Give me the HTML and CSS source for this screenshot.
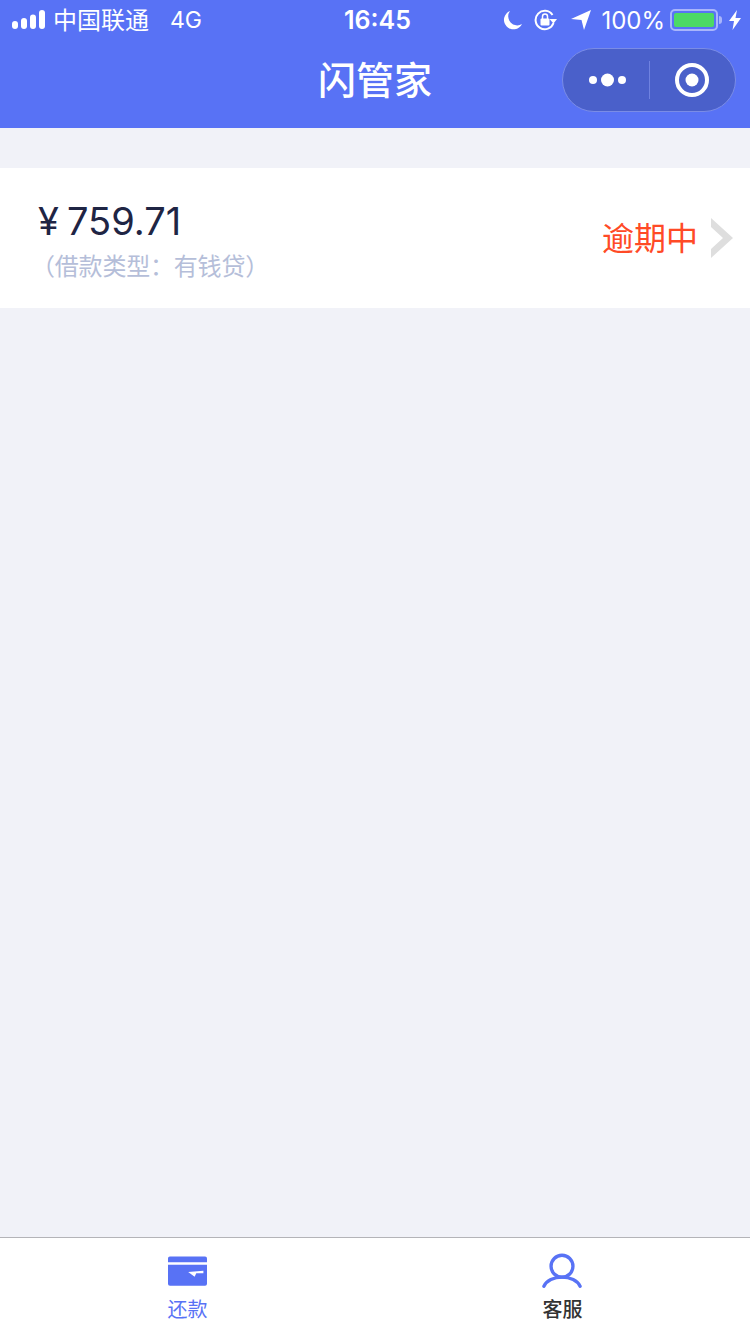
FILE: index.html
```html
<!DOCTYPE html>
<html lang="zh-CN">
  <head>
    <meta charset="UTF-8" />
    <meta name="viewport" content="width=device-width, initial-scale=1.0" />
    <title>闪管家</title>
    <link rel="stylesheet" href="styles.css">
  </head>
  <body>
    <header class="top">
      <div class="statusbar">
        <div class="status-left">
          <svg class="signal" width="34" height="20" viewBox="0 0 34 20">
            <rect x="0" y="11" width="6" height="8" rx="3" fill="#fff"/>
            <rect x="9" y="8" width="6" height="11" rx="3" fill="#fff"/>
            <rect x="18" y="4.500" width="6" height="14.500" rx="3" fill="#fff"/>
            <rect x="27" y="0" width="6" height="19" rx="3" fill="#fff"/>
          </svg>
          <span class="carrier">中国联通</span>
          <span class="network">4G</span>
        </div>
        <div class="clock">16:45</div>
        <div class="status-right">
          <svg class="moon" width="20" height="20" viewBox="0 0 20 20">
            <path d="M7 1 A9.500 9.500 0 1 0 19 14 A9 9 0 0 1 7 1 Z" fill="#fff"/>
          </svg>
          <svg class="rotate" width="24" height="22" viewBox="0 0 24 22">
            <path d="M18.500 6 A9.200 9.200 0 1 0 19.500 14" fill="none" stroke="#fff" stroke-width="2"/>
            <path d="M15.500 10 L23 10 L19.500 14.500 Z" fill="#fff"/>
            <rect x="6.500" y="9.500" width="9" height="7" rx="1" fill="#fff"/>
            <path d="M8.500 10 V7.500 A2.500 2.500 0 0 1 13.500 7.500 V10" fill="none" stroke="#fff" stroke-width="1.500"/>
          </svg>
          <svg class="arrow" width="20" height="20" viewBox="0 0 20 20">
            <path d="M0 9 L20 0 L13 20 L10.500 10 Z" fill="#fff"/>
          </svg>
          <span class="percent">100%</span>
          <div class="battery"><div class="battery-fill"></div></div>
          <span class="battery-tip"></span>
          <svg class="bolt" width="12" height="20" viewBox="0 0 12 20">
            <path d="M8 0 L0 11 L5 11 L3.500 20 L12 8 L6.500 8 Z" fill="#fff"/>
          </svg>
        </div>
      </div>
      <div class="navbar">
        <h1 class="nav-title">闪管家</h1>
        <div class="capsule">
          <div class="capsule-part">
            <svg class="capsule-dots" width="38" height="14" viewBox="0 0 38 14">
              <circle cx="4" cy="7" r="4" fill="#fff"/>
              <circle cx="18.500" cy="7" r="6.500" fill="#fff"/>
              <circle cx="33" cy="7" r="4" fill="#fff"/>
            </svg>
          </div>
          <div class="capsule-line"></div>
          <div class="capsule-part">
            <svg width="34" height="34" viewBox="0 0 34 34">
              <circle cx="17" cy="17" r="15" fill="none" stroke="#fff" stroke-width="4"/>
              <circle cx="17" cy="17" r="6.500" fill="#fff"/>
            </svg>
          </div>
        </div>
      </div>
    </header>

    <main class="content">
      <div class="loan-card">
        <div class="loan-info">
          <div class="loan-amount"><span class="yen">¥</span>759.71</div>
          <div class="loan-type">（借款类型：有钱贷）</div>
        </div>
        <div class="loan-status">
          <span class="status-text">逾期中</span>
          <svg width="22" height="40" viewBox="0 0 22 40">
            <path d="M0 0 L22 20 L0 40 L0 31 L12 20 L0 9 Z" fill="#dedede"/>
          </svg>
        </div>
      </div>
    </main>

    <nav class="tabbar">
      <div class="tab tab-active">
        <svg width="39" height="36" viewBox="0 0 40 30">
          <path d="M2 0 H38 A2 2 0 0 1 40 2 V6 H0 V2 A2 2 0 0 1 2 0 Z" fill="#5872f5"/>
          <path d="M0 8.500 H40 V28 A2 2 0 0 1 38 30 H2 A2 2 0 0 1 0 28 Z" fill="#5872f5"/>
          <path d="M20.700 16 L36.300 14.700 V17.300 H29 L27.300 21 Z" fill="#fff"/>
        </svg>
        <span>还款</span>
      </div>
      <div class="tab">
        <svg class="person" width="40" height="36" viewBox="0 0 42 36">
          <circle cx="21" cy="13" r="11.500" fill="none" stroke="#5872f5" stroke-width="3.500"/>
          <path d="M2 34 A20 14 0 0 1 40 34" fill="none" stroke="#5872f5" stroke-width="3.500" stroke-linecap="round"/>
        </svg>
        <span>客服</span>
      </div>
    </nav>
  </body>
</html>
```

FILE: styles.css
```css
body {
  font-family: "Noto Sans CJK SC", "Liberation Sans", sans-serif;
  margin: 0;
  padding: 0;
  width: 750px;
  height: 1334px;
  display: flex;
  flex-direction: column;
  overflow: hidden;
  background-color: #f1f2f8;
}

.top {
  background-color: #5872f5;
  color: white;
}

.statusbar {
  height: 40px;
  display: flex;
  justify-content: space-between;
  align-items: center;
  padding: 0 9px 0 12px;
  position: relative;
}

.status-left,
.status-right {
  display: flex;
  align-items: center;
}

.signal {
  margin-right: 7px;
}

.carrier {
  font-size: 24px;
  padding-bottom: 4px;
}

.network {
  font-family: "Inter", "Liberation Sans", sans-serif;
  font-size: 23px;
  margin-left: 21px;
}

.clock {
  font-family: "Inter", "Liberation Sans", sans-serif;
  font-size: 25px;
  font-weight: 600;
  position: absolute;
  left: 344px;
  top: 5px;
}

.moon {
  margin-right: 11px;
}

.rotate {
  margin-right: 13px;
}

.arrow {
  margin-right: 10px;
}

.percent {
  font-family: "Inter", "Liberation Sans", sans-serif;
  font-size: 24px;
  margin-right: 5px;
}

.battery {
  width: 48px;
  height: 22px;
  box-sizing: border-box;
  border: 2px solid #a9b5fb;
  border-radius: 5px;
  padding: 2px;
}

.battery-fill {
  height: 100%;
  background-color: #4cd964;
  border-radius: 2px;
}

.battery-tip {
  width: 3px;
  height: 8px;
  background-color: #a9b5fb;
  border-radius: 0 3px 3px 0;
  margin: 0 7px 0 1px;
}

.navbar {
  height: 88px;
  position: relative;
  display: flex;
  justify-content: center;
  align-items: center;
}

.nav-title {
  margin: 0;
  font-size: 38px;
  font-weight: 500;
  position: relative;
  top: -7px;
}

.capsule {
  position: absolute;
  right: 14px;
  top: 8px;
  width: 174px;
  height: 64px;
  box-sizing: border-box;
  display: flex;
  align-items: center;
  background-color: #4a60ca;
  border: 1px solid #7a8ce6;
  border-radius: 32px;
}

.capsule-part {
  flex: 1;
  display: flex;
  justify-content: center;
  align-items: center;
}

.capsule-dots {
  margin-left: 4px;
}

.capsule-line {
  width: 1px;
  height: 38px;
  background-color: #6f82e0;
}

.content {
  flex: 1;
  padding-top: 40px;
}

.loan-card {
  height: 140px;
  background-color: white;
  display: flex;
  justify-content: space-between;
  align-items: center;
  padding: 0 17px 0 38px;
}

.loan-info {
  padding-top: 5px;
}

.loan-amount {
  font-family: "Inter", "Liberation Sans", sans-serif;
  font-size: 38px;
  line-height: 48px;
  color: #1f2544;
}

.yen {
  margin-right: 8px;
}

.loan-type {
  font-size: 24px;
  line-height: 40px;
  color: #b5bed9;
  margin-left: -7px;
  letter-spacing: -0.2px;
}

.loan-status {
  display: flex;
  align-items: center;
  gap: 13px;
  color: #ff4a26;
  font-size: 32px;
}

.status-text {
  padding-bottom: 4px;
}

.tabbar {
  height: 97px;
  box-sizing: border-box;
  background-color: white;
  border-top: 1px solid #b4b4b8;
  display: flex;
}

.tab {
  flex: 1;
  display: flex;
  flex-direction: column;
  align-items: center;
  padding-top: 15px;
  font-size: 20px;
  color: #333;
  font-weight: 500;
}

.tab svg {
  flex: none;
}

.tab .person {
  margin-right: 2px;
}

.tab span {
  line-height: 30px;
  margin-top: 5px;
}

.tab-active {
  color: #5872f5;
  font-weight: 400;
}
```
